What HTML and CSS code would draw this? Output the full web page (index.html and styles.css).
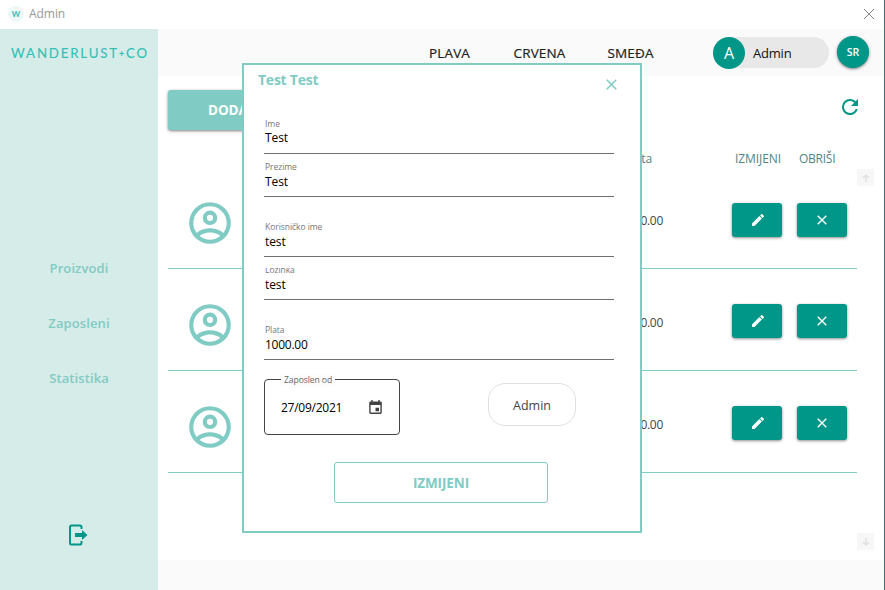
FILE: index.html
```html
<!DOCTYPE html>
<html lang="bs">
<head>
<meta charset="utf-8">
<title>Admin</title>
<link rel="stylesheet" href="styles.css">
</head>
<body>
<svg class="defs" aria-hidden="true">
  <symbol id="avatar" viewBox="0 0 24 24"><path d="M12 2A10 10 0 1 0 22 12 10 10 0 0 0 12 2M7.07 18.28C7.5 17.38 10.12 16.5 12 16.5S16.5 17.38 16.93 18.28A7.86 7.86 0 0 1 7.07 18.28M18.36 16.83C16.93 15.09 13.46 14.5 12 14.5S7.07 15.09 5.64 16.83A8 8 0 1 1 18.36 16.83M12 6A3.5 3.5 0 1 0 15.5 9.5 3.5 3.5 0 0 0 12 6M12 11A1.5 1.5 0 1 1 13.5 9.5 1.5 1.5 0 0 1 12 11Z"/></symbol>
  <symbol id="pencil" viewBox="0 0 24 24"><path d="M20.71 7.04c.39-.39.39-1.04 0-1.41l-2.34-2.34c-.37-.39-1.02-.39-1.41 0l-1.84 1.83 3.75 3.75M3 17.25V21h3.75L17.81 9.93l-3.75-3.75z"/></symbol>
  <symbol id="cross" viewBox="0 0 10 10"><path d="M.7.7l8.6 8.6M9.3.7L.7 9.3" fill="none" stroke="currentColor" stroke-width="1.4"/></symbol>
</svg>
<div class="window">
  <header class="titlebar">
    <span class="app-icon">W</span>
    <span class="app-title">Admin</span>
    <svg class="win-close" viewBox="0 0 10 10"><path d="M0 0l10 10M10 0L0 10"/></svg>
  </header>
  <div class="body">
    <aside class="sidebar">
      <div class="brand">WANDERLUST<span class="plus">+</span>CO</div>
      <nav class="side-nav">
        <a>Proizvodi</a>
        <a>Zaposleni</a>
        <a>Statistika</a>
      </nav>
      <svg class="logout" viewBox="0 0 20 22"><path d="M13.5 5V3.2Q13.500 1.500 12 1.500H3.500Q2 1.500 2 3V19Q2 20.500 3.500 20.500H12Q13.500 20.500 13.500 18.800V17" fill="none" stroke="currentColor" stroke-width="2"/><path d="M7 9h7V6l5.500 5-5.500 5v-3H7z"/></svg>
    </aside>
    <main class="main">
      <div class="topbar">
        <a class="theme t1">PLAVA</a>
        <a class="theme t2">CRVENA</a>
        <a class="theme t3">SMEĐA</a>
        <div class="user"><span class="user-initial">A</span><span class="user-name">Admin</span></div>
        <button class="lang">SR</button>
      </div>
      <section class="content">
        <div class="toolbar">
          <button class="add">DODAJ</button>
          <svg class="refresh" viewBox="4 4 16 16"><path d="M17.65 6.35C16.200 4.900 14.210 4 12 4a8 8 0 1 0 7.730 10h-2.080A6 6 0 1 1 12 6c1.660 0 3.140.69 4.220 1.780L13 11h7V4z"/></svg>
        </div>
        <div class="table-head"><span class="h-pay">Plata</span><span class="h-edit">IZMIJENI</span><span class="h-del">OBRIŠI</span></div>
        <div class="list">
          <div class="rows">
            <div class="row"><svg class="avatar"><use href="#avatar"/></svg><span class="pay">1000.00</span><button class="act"><svg class="i-pencil"><use href="#pencil"/></svg></button><button class="act"><svg class="i-cross"><use href="#cross"/></svg></button></div>
            <div class="row"><svg class="avatar"><use href="#avatar"/></svg><span class="pay">1000.00</span><button class="act"><svg class="i-pencil"><use href="#pencil"/></svg></button><button class="act"><svg class="i-cross"><use href="#cross"/></svg></button></div>
            <div class="row"><svg class="avatar"><use href="#avatar"/></svg><span class="pay">1000.00</span><button class="act"><svg class="i-pencil"><use href="#pencil"/></svg></button><button class="act"><svg class="i-cross"><use href="#cross"/></svg></button></div>
          </div>
          <div class="scroll">
            <span class="sbtn"><svg viewBox="0 0 8 8"><path d="M4 8V1M1 4l3-3 3 3"/></svg></span>
            <span class="sbtn"><svg viewBox="0 0 8 8"><path d="M4 0v7M1 4l3 3 3-3"/></svg></span>
          </div>
        </div>
      </section>
      <footer class="footer"></footer>
    </main>
  </div>
</div>

<div class="dialog">
  <div class="dialog-head"><h1>Test Test</h1><svg class="dialog-close"><use href="#cross"/></svg></div>
  <form class="form">
    <div class="field"><label>Ime</label><span class="value">Test</span></div>
    <div class="field near"><label>Prezime</label><span class="value">Test</span></div>
    <div class="field far"><label>Korisničko ime</label><span class="value">test</span></div>
    <div class="field near"><label class="clipped"><span>Lozinka</span></label><span class="value">test</span></div>
    <div class="field far"><label>Plata</label><span class="value number">1000.00</span></div>
    <div class="pair">
      <div class="date"><span class="date-label">Zaposlen od</span><span class="number">27/09/2021</span>
        <svg class="calendar" viewBox="3 1 18 20"><path d="M19 19H5V8h14M16 1v2H8V1H6v2H5C3.890 3 3 3.890 3 5v14a2 2 0 0 0 2 2h14a2 2 0 0 0 2-2V5a2 2 0 0 0-2-2h-1V1M17 12h-5v5h5z"/></svg>
      </div>
      <span class="chip">Admin</span>
    </div>
    <button class="submit" type="button">IZMIJENI</button>
  </form>
</div>
</body>
</html>
```

FILE: styles.css
```css
* { box-sizing: border-box; }
body {
  margin: 0;
  width: 885px;
  height: 590px;
  overflow: hidden;
  position: relative;
  background: #fff;
  color: #222;
  font-family: "Open Sans", "Noto Sans", sans-serif;
  font-size: 12px;
}
button { font-family: inherit; border: 0; padding: 0; }
svg { display: block; fill: currentColor; flex: none; }
.defs { position: absolute; width: 0; height: 0; }

.window { height: 590px; display: flex; flex-direction: column; border-right: 1px solid #3e7074; }
.titlebar { height: 29px; flex: none; display: flex; align-items: center; padding: 0 10px 2px 8px; }
.app-icon {
  width: 16px; height: 16px; border-radius: 50%;
  background: #eef9f7; color: #35bdb2;
  font: bold 8px/16px Lato, sans-serif; text-align: center;
}
.app-title { margin-left: 5px; color: #999; font-size: 12px; letter-spacing: -.05px; }
.win-close { width: 10px; height: 10px; margin-left: auto; fill: none; stroke: #888; stroke-width: 1; overflow: visible; }
.body { flex: 1; display: flex; }

.sidebar { width: 158px; flex: none; background: #d6ece9; display: flex; flex-direction: column; align-items: center; }
.brand {
  margin: 14px 0 0 2px; height: 20px; line-height: 20px; white-space: nowrap;
  font-family: Lato, sans-serif; font-size: 13.3px; letter-spacing: 1.8px; color: #2fc1b6;
  -webkit-text-stroke: .1px #2fc1b6;
}
.plus { font-size: 9px; font-weight: 700; vertical-align: 1px; }
.side-nav {
  margin-top: 195px; display: flex; flex-direction: column; align-items: center; gap: 35px;
  font-weight: 600; font-size: 13px; line-height: 20px; letter-spacing: .1px; color: #80cbc4;
}
.logout { width: 20px; height: 22px; margin: 136px 2px 0 0; color: #009688; }

.main { flex: 1; display: flex; flex-direction: column; }
.topbar { height: 47px; background: #fafafa; display: flex; align-items: center; padding-left: 271px; font-size: 13.5px; }
.theme { line-height: 20px; white-space: nowrap; letter-spacing: .15px; -webkit-text-stroke: .2px #222; }
.t1 { width: 84.5px; }
.t2 { width: 94px; }
.t3 { width: 105.5px; }
.user { width: 116px; height: 31px; border-radius: 16px; background: #e8e8e8; display: flex; align-items: center; color: #111; }
.user-initial { width: 32px; height: 32px; flex: none; border-radius: 50%; background: #009688; color: #fff; text-align: center; font-size: 16px; line-height: 33px; }
.user-name { margin-left: 8px; font-size: 13px; letter-spacing: -.2px; }
.lang {
  width: 32px; height: 32px; margin: 0 0 2px 8px; border-radius: 50%; background: #009688; color: #fff;
  font-size: 10.5px; font-weight: 600; box-shadow: 0 1px 3px rgba(0,0,0,.5);
}

.content { height: 484px; background: #fff; padding-left: 10px; }
.toolbar { height: 74px; padding-top: 14px; padding-right: 26px; display: flex; justify-content: space-between; }
.add {
  width: 130px; height: 40px; border-radius: 3px; background: #80cbc4; color: #fff;
  font-size: 13.5px; font-weight: 700; letter-spacing: -.1px; text-align: left; padding-left: 40px; box-shadow: 0 1px 3px rgba(0,0,0,.5);
}
.refresh { width: 16px; height: 16px; margin-top: 9px; color: #009688; }
.table-head { height: 17px; display: flex; line-height: 17px; color: #4f8584; font-size: 12px; letter-spacing: -.08px; }
.h-pay { width: 484px; text-align: right; }
.h-edit { margin-left: 83px; width: 64px; }
.h-del { letter-spacing: -.25px; }
.list { display: flex; }
.rows { width: 689px; }
.row { height: 102px; display: flex; align-items: flex-start; padding-top: 35px; border-bottom: 1px solid #80cbc4; }
.row:first-child { padding-top: 36px; }
.avatar { width: 50px; height: 50px; margin: -4px 0 0 17px; color: #80cbc4; }
.row:first-child .avatar { margin-top: -5px; }
.pay { width: 428px; margin-right: 69px; padding-top: 2px; text-align: right; line-height: 34px; letter-spacing: -.3px; color: #444; }
.row:first-child .pay { padding-top: 1px; }
.act {
  width: 50px; height: 34px; margin-right: 15px; border-radius: 3px; background: #009688; color: #fff;
  display: flex; align-items: center; justify-content: center; box-shadow: 0 1px 3px rgba(0,0,0,.45);
}
.act:last-child { margin-right: 0; }
.i-pencil { width: 16px; height: 16px; margin-left: 1px; }
.i-cross { width: 10px; height: 10px; }
.scroll { height: 381px; margin-top: 2px; display: flex; flex-direction: column; justify-content: space-between; }
.sbtn { width: 17px; height: 17px; background: #f7f7f7; display: flex; align-items: center; justify-content: center; }
.sbtn svg { width: 8px; height: 8px; fill: none; stroke: #e2e2e2; stroke-width: 1.5; }
.footer { flex: 1; background: #fafafa; }

.dialog { position: absolute; left: 242px; top: 63px; width: 400px; height: 470px; border: 2px solid #80cbc4; background: #fff; }
.dialog-head { height: 53px; display: flex; justify-content: space-between; padding: 4px 23px 0 14px; color: #80cbc4; }
h1 { margin: 0; font-size: 14px; line-height: 21px; font-weight: 700; letter-spacing: -.25px; }
.dialog-close { width: 11px; height: 11px; margin-top: 10px; }
.form { width: 350px; margin-left: 20px; }
.field { height: 36px; border-bottom: 1px solid #707070; display: flex; flex-direction: column; padding-left: 1px; color: #000; }
.field label { height: 12px; line-height: 12px; font-size: 8.5px; color: #777; letter-spacing: -.05px; }
.field .value { line-height: 17px; font-size: 12px; letter-spacing: -.1px; }
.field:first-child .value { line-height: 16px; }
.field .number, .number { letter-spacing: -.25px; }
.near { margin-top: 7px; }
.far { margin-top: 24px; }
.field .clipped { height: 8px; margin-top: 4px; overflow: hidden; }
.clipped span { display: block; margin-top: -4px; }
.pair { margin-top: 19px; display: flex; justify-content: space-between; padding-right: 38px; }
.date {
  position: relative; width: 136px; height: 56px; border: 1px solid #444; border-radius: 4px;
  display: flex; align-items: center; justify-content: space-between; padding: 0 17px 0 16px; color: #000;
}
.date-label { position: absolute; left: 16px; top: -6px; padding: 0 3px; background: #fcfcfc; color: #666; font-size: 8.6px; line-height: 13px; letter-spacing: -.1px; }
.calendar { width: 13px; height: 14px; color: #424242; }
.chip { width: 88px; height: 43px; margin-top: 4px; border: 1px solid #e0e0e0; border-radius: 17px; text-align: center; line-height: 43px; font-size: 12.5px; color: #444; }
.submit { display: block; width: 214px; height: 41px; margin: 27px 0 0 70px; border: 1px solid #80cbc4; border-radius: 3px; background: #fff; color: #80cbc4; font-size: 13.5px; font-weight: 700; letter-spacing: -.1px; }
```
